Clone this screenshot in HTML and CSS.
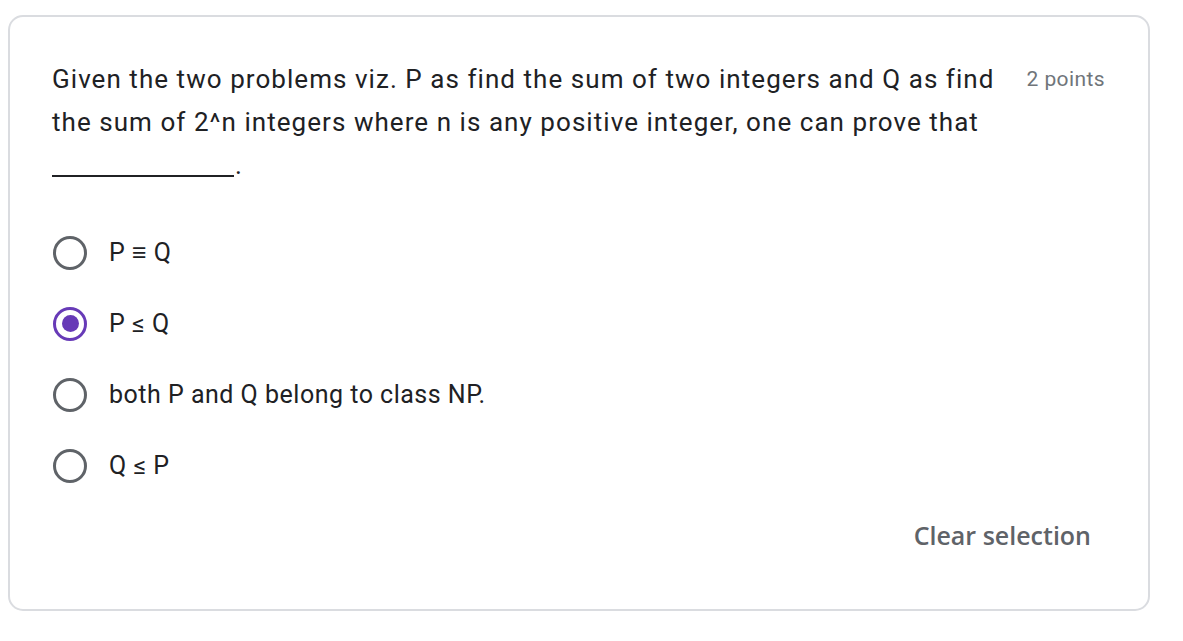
FILE: index.html
```html
<!DOCTYPE html>
<html>
<head>
<meta charset="utf-8">
<link rel="stylesheet" href="styles.css">
</head>
<body>
<div class="card">
  <div class="header">
    <div class="title">Given the two problems viz. P as find the sum of two integers and Q as find the sum of 2^n integers where n is any positive integer, one can prove that <span class="blank"></span>.</div>
    <div class="points">2 points</div>
  </div>
  <div class="options">
    <label class="option"><span class="radio"></span><span class="label">P ≡ Q</span></label>
    <label class="option"><span class="radio checked"></span><span class="label">P ≤ Q</span></label>
    <label class="option"><span class="radio"></span><span class="label">both P and Q belong to class NP.</span></label>
    <label class="option"><span class="radio"></span><span class="label">Q ≤ P</span></label>
  </div>
  <div class="footer"><span class="clear">Clear selection</span></div>
</div>
</body>
</html>
```
FILE: styles.css
```css
html, body {
  margin: 0;
  padding: 0;
  background: #ffffff;
}
body {
  font-family: Roboto, "Liberation Sans", sans-serif;
  color: #202124;
}
.card {
  margin: 15px 0 0 8px;
  width: 1142px;
  height: 596px;
  box-sizing: border-box;
  border: 2px solid #dadce0;
  border-radius: 15px;
  padding: 41px 43px 0 42px;
}
.header {
  display: flex;
  align-items: flex-start;
  gap: 16px;
}
.title {
  flex: 1;
  font-size: 26px;
  line-height: 43px;
  letter-spacing: 1.05px;
}
.blank {
  display: inline-block;
  width: 182px;
  height: 2px;
  background: #202124;
  vertical-align: -3px;
  margin-right: 1px;
}
.points {
  font-size: 21px;
  line-height: 43px;
  letter-spacing: 0.4px;
  color: #70757a;
  white-space: nowrap;
}
.options {
  display: flex;
  flex-direction: column;
  margin-top: 30px;
}
.option {
  display: flex;
  align-items: center;
  height: 71px;
  gap: 22px;
}
.radio {
  width: 34px;
  height: 34px;
  box-sizing: border-box;
  border: 3.5px solid #5f6368;
  border-radius: 50%;
  flex: none;
  margin-left: 1px;
  display: flex;
  align-items: center;
  justify-content: center;
}
.radio.checked {
  border-color: #673ab7;
}
.radio.checked::after {
  content: "";
  width: 17px;
  height: 17px;
  border-radius: 50%;
  background: #673ab7;
}
.label {
  font-size: 25px;
  line-height: 30px;
  letter-spacing: 0.5px;
}
.footer {
  display: flex;
  justify-content: flex-end;
  margin-top: 17px;
  padding-right: 14px;
}
.clear {
  font-family: "Open Sans", Roboto, sans-serif;
  font-weight: 600;
  font-size: 25px;
  line-height: 34px;
  color: #5f6368;
}
```
